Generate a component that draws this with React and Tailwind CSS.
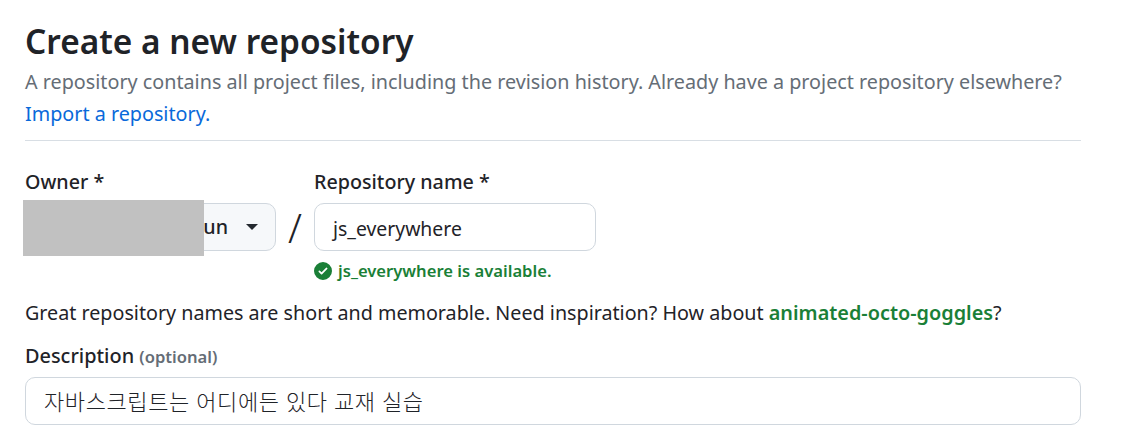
import React from "react";

function CheckIcon() {
  return (
    <svg width="18" height="18" viewBox="0 0 16 16" fill="#1a7f37" className="shrink-0">
      <path d="M8 16A8 8 0 1 1 8 0a8 8 0 0 1 0 16Zm3.78-9.72a.751.751 0 0 0-1.06-1.06L6.75 9.19 5.28 7.72a.751.751 0 0 0-1.06 1.06l2 2a.75.75 0 0 0 1.06 0l4.5-4.5Z" />
    </svg>
  );
}

export default function App() {
  return (
    <div className="h-[439px] w-[1123px] overflow-hidden bg-white pl-[25px] pt-[18px] font-['Noto_Sans','Noto_Sans_CJK_KR',sans-serif] text-[#1f2328]">
      {/* Header */}
      <div className="w-[1056px] border-b border-[#d8dee4] pb-[10px]">
        <h1 className="text-[33.4px] font-semibold leading-[46px]">Create a new repository</h1>
        <p className="mt-[2px] text-[19.75px] leading-[32px] text-[#656d76]">
          A repository contains all project files, including the revision history. Already have a project repository elsewhere?{" "}
          <a className="text-[#0969da]">Import a repository.</a>
        </p>
      </div>

      {/* Owner / name */}
      <div className="mt-[26px] flex items-start">
        <div className="relative w-[251px]">
          <div className="text-[19.7px] font-medium leading-[30px]">Owner *</div>
          <div className="ml-[20px] mt-[6px] flex h-[48px] items-center justify-end rounded-r-[10px] border border-[#d0d7de] bg-[#f6f8fa] pr-[17px]">
            <span className="text-[19.7px] font-medium">un</span>
            <span className="ml-[18px] h-0 w-0 border-x-[6px] border-t-[6px] border-x-transparent border-t-[#24292f]" />
          </div>
          <div className="absolute left-[-2px] top-[33px] h-[56px] w-[181px] bg-[#c1c1c1]" />
        </div>
        <div className="mt-[36px] w-[38px] text-center text-[40px] font-light leading-[50px]">/</div>
        <div className="w-[282px]">
          <div className="text-[19.7px] font-medium leading-[30px]">Repository name *</div>
          <div className="mt-[6px] flex h-[48px] items-center rounded-[10px] border border-[#d0d7de] pl-[18px] pt-[3px] text-[19.4px]">
            js_everywhere
          </div>
          <div className="mt-[8px] flex items-center gap-[6px] text-[16.6px] font-semibold leading-[24px] text-[#1a7f37]">
            <CheckIcon />
            js_everywhere is available.
          </div>
        </div>
      </div>

      <p className="mt-[14px] text-[19.72px] leading-[32px]">
        Great repository names are short and memorable. Need inspiration? How about{" "}
        <a className="text-[19.85px] font-semibold text-[#1a7f37]">animated-octo-goggles</a>?
      </p>

      {/* Description */}
      <div className="mt-[12px] w-[1056px]">
        <div className="text-[19.9px] font-medium leading-[30px]">
          Description <span className="text-[16.6px] font-semibold text-[#656d76]">(optional)</span>
        </div>
        <div className="mt-[5px] flex h-[48px] items-center rounded-[10px] border border-[#d0d7de] pl-[18px] text-[22px] font-light tracking-[0.6px]">
          자바스크립트는 어디에든 있다 교재 실습
        </div>
      </div>
    </div>
  );
}
